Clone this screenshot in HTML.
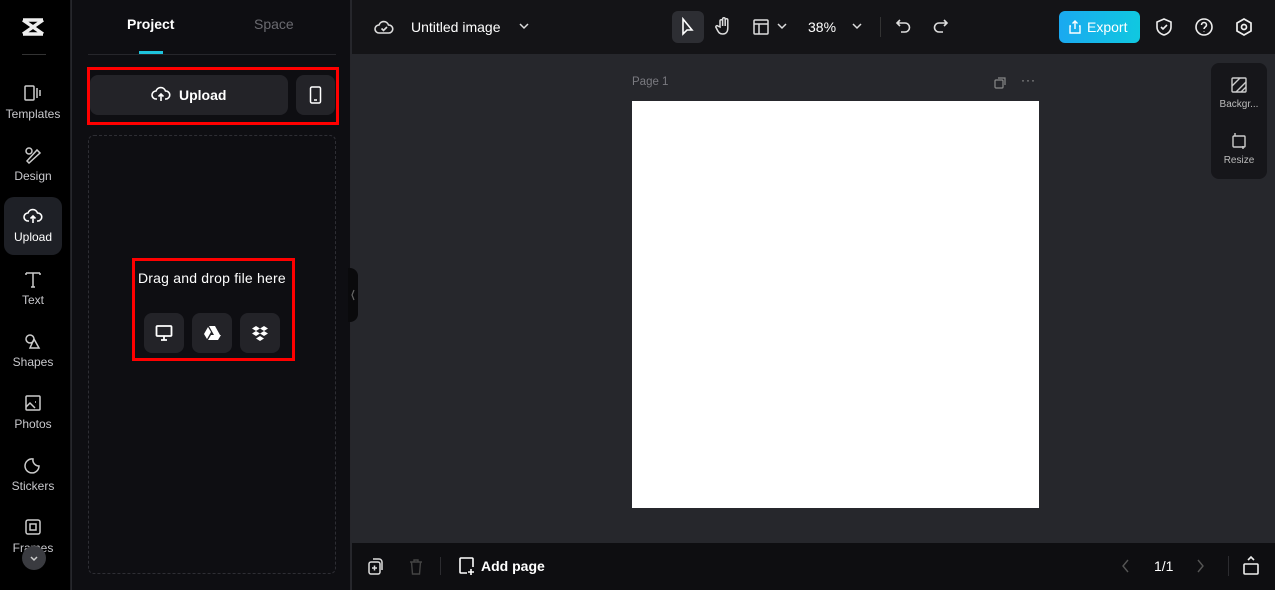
<!DOCTYPE html>
<html><head><meta charset="utf-8"><style>
*{box-sizing:border-box;margin:0;padding:0}
body{width:1275px;height:590px;overflow:hidden;background:#26272c;font-family:"Liberation Sans",sans-serif;color:#fff;position:relative}
.abs{position:absolute}
svg{display:block}
.nav{left:0;top:0;width:71px;height:590px;background:#000;border-right:1px solid #1e1e22}
.ni{position:absolute;left:4px;width:58px;height:58px;text-align:center;font-size:12px;color:#c8c8cc}
.ni svg{margin:10px auto 5px}
.panel{left:72px;top:0;width:279px;height:590px;background:#0e0e12;border-right:1px solid #26262b}
.top{left:352px;top:0;width:923px;height:54px;background:#141417}
.bot{left:352px;top:543px;width:923px;height:47px;background:#0e0e11}
.btn{background:#232328;border-radius:8px}
</style></head><body>
<div class="abs nav">
 <svg class="abs" style="left:21px;top:17px" width="24" height="20" viewBox="0 0 24 20"><path d="M2 3h20M2 17h20M2 3l20 14M22 3L2 17" stroke="#eee" stroke-width="3.5" fill="none"/></svg>
 <div class="abs" style="left:22px;top:54px;width:24px;height:1px;background:#333"></div>
 <div class="ni" style="top:74px"><svg width="20" height="18" viewBox="0 0 20 18" fill="none" stroke="#ccc" stroke-width="1.5"><rect x="2" y="2" width="9" height="14" rx="1"/><path d="M14 4v10M17 6v6"/></svg>Templates</div>
 <div class="ni" style="top:136px"><svg width="20" height="18" viewBox="0 0 20 18" fill="none" stroke="#ccc" stroke-width="1.5"><circle cx="6" cy="5" r="3"/><path d="M4 15l10-11 3 3-11 10z"/></svg>Design</div>
 <div class="ni" style="top:197px;background:#1e2026;border-radius:10px;color:#fff"><svg width="20" height="18" viewBox="0 0 20 18" fill="none" stroke="#fff" stroke-width="1.6"><path d="M6 14H5a4 4 0 010-8 5 5 0 019.5 0A4 4 0 0115 14h-1M10 16V9M7.5 11.5L10 9l2.5 2.5"/></svg>Upload</div>
 <div class="ni" style="top:260px"><svg width="20" height="18" viewBox="0 0 20 18" fill="none" stroke="#ccc" stroke-width="1.5"><path d="M3 3h14M10 3v14M3 3v2M17 3v2M8 17h4"/></svg>Text</div>
 <div class="ni" style="top:322px"><svg width="20" height="18" viewBox="0 0 20 18" fill="none" stroke="#ccc" stroke-width="1.5"><circle cx="7" cy="7" r="4"/><path d="M11 7l5 9H7z"/></svg>Shapes</div>
 <div class="ni" style="top:384px"><svg width="20" height="18" viewBox="0 0 20 18" fill="none" stroke="#ccc" stroke-width="1.5"><rect x="3" y="2" width="14" height="14" rx="1"/><path d="M3 13l4-4 5 5M12 8l1 0"/></svg>Photos</div>
 <div class="ni" style="top:446px"><svg width="20" height="18" viewBox="0 0 20 18" fill="none" stroke="#ccc" stroke-width="1.5"><path d="M16 10a7 7 0 11-6-7 6 6 0 006 7z"/></svg>Stickers</div>
 <div class="ni" style="top:508px"><svg width="20" height="18" viewBox="0 0 20 18" fill="none" stroke="#ccc" stroke-width="1.5"><rect x="3" y="2" width="14" height="14" rx="2"/><rect x="7" y="6" width="6" height="6"/></svg>Frames</div>
 <div class="abs" style="left:22px;top:546px;width:24px;height:24px;border-radius:50%;background:#3a3b40"><svg width="24" height="24" viewBox="0 0 24 24"><path d="M9 11l3 3 3-3" stroke="#ccc" stroke-width="1.5" fill="none"/></svg></div>
</div>
<div class="abs panel">
 <div class="abs" style="left:55px;top:16px;font-size:14px;font-weight:bold">Project</div>
 <div class="abs" style="left:182px;top:16px;font-size:14px;color:#6a6a70">Space</div>
 <div class="abs" style="left:16px;top:54px;width:248px;height:1px;background:#26262b"></div>
 <div class="abs" style="left:67px;top:51px;width:24px;height:3px;background:#1ec3dc"></div>
 <div class="abs btn" style="left:18px;top:75px;width:198px;height:40px"></div>
 <svg class="abs" style="left:79px;top:85px" width="20" height="18" viewBox="0 0 20 18" fill="none" stroke="#fff" stroke-width="1.6"><path d="M6 14H5a4 4 0 010-8 5 5 0 019.5 0A4 4 0 0115 14h-1M10 16V9M7.5 11.5L10 9l2.5 2.5"/></svg>
 <div class="abs" style="left:107px;top:87px;font-size:14px;font-weight:bold">Upload</div>
 <div class="abs btn" style="left:224px;top:75px;width:39px;height:40px"></div>
 <svg class="abs" style="left:237px;top:86px" width="13" height="18" viewBox="0 0 13 18" fill="none" stroke="#fff" stroke-width="1.5"><rect x="1.5" y="1" width="10" height="16" rx="1.5"/><path d="M5 14h3"/></svg>
 <div class="abs" style="left:15px;top:67px;width:252px;height:58px;border:3px solid #f00"></div>
 <div class="abs" style="left:16px;top:135px;width:248px;height:439px;border:1px dashed #2e2e34;border-radius:6px"></div>
 <div class="abs" style="left:60px;top:258px;width:163px;height:103px;border:3px solid #f00"></div>
 <div class="abs" style="left:66px;top:270px;font-size:14px;letter-spacing:0.2px">Drag and drop file here</div>
 <div class="abs btn" style="left:72px;top:313px;width:40px;height:40px"><svg width="40" height="40" viewBox="0 0 40 40" fill="none" stroke="#fff" stroke-width="1.8"><rect x="12.5" y="13" width="15" height="10" rx="1"/><path d="M17 27h6M20 23v4"/></svg></div>
 <div class="abs btn" style="left:120px;top:313px;width:40px;height:40px"><svg width="40" height="40" viewBox="0 0 40 40" fill="#fff"><path d="M17 13h6l5 9h-6zM16 14l3 5-4 7-3-5zM19 22h10l-3 5H16z"/></svg></div>
 <div class="abs btn" style="left:168px;top:313px;width:40px;height:40px"><svg width="40" height="40" viewBox="0 0 40 40" fill="#fff"><path d="M16 13l4 2.5-4 2.5-4-2.5zM24 13l4 2.5-4 2.5-4-2.5zM16 18l4 2.5-4 2.5-4-2.5zM24 18l4 2.5-4 2.5-4-2.5zM20 23l4 2.5-4 2.5-4-2.5z"/></svg></div>
</div>
<div class="abs" style="left:348px;top:268px;width:10px;height:54px;background:#0a0a0c;border-radius:0 8px 8px 0"><svg width="10" height="54"><path d="M6 22l-2 5 2 5" stroke="#666" stroke-width="1.2" fill="none"/></svg></div>
<div class="abs top">
 <svg class="abs" style="left:22px;top:17px" width="20" height="20" viewBox="0 0 20 20" fill="none" stroke="#ddd" stroke-width="1.6"><path d="M6 16H5a4 4 0 010-8 5 5 0 019.5 0A4 4 0 0115 16zM7.5 11.5l2 2 3.5-3.5"/></svg>
 <div class="abs" style="left:59px;top:19px;font-size:14px">Untitled image</div>
 <svg class="abs" style="left:166px;top:21px" width="12" height="10"><path d="M2 3l4 4 4-4" stroke="#ddd" stroke-width="1.5" fill="none"/></svg>
 <div class="abs" style="left:320px;top:11px;width:32px;height:32px;background:#2d2e33;border-radius:6px"></div>
 <svg class="abs" style="left:327px;top:17px" width="18" height="20" viewBox="0 0 18 20" fill="none" stroke="#fff" stroke-width="1.6"><path d="M4 2v15l4-4 5 0z"/></svg>
 <svg class="abs" style="left:363px;top:16px" width="18" height="20" viewBox="0 0 18 20" fill="none" stroke="#ddd" stroke-width="1.5"><path d="M5 11V5a1.3 1.3 0 012.6 0v5V3a1.3 1.3 0 012.6 0v7V4a1.3 1.3 0 012.6 0v8c0 4-2 6-5 6s-4-1-6-5l-1-2a1.2 1.2 0 012-1z"/></svg>
 <svg class="abs" style="left:400px;top:18px" width="18" height="18" viewBox="0 0 18 18" fill="none" stroke="#ddd" stroke-width="1.5"><rect x="2" y="2" width="14" height="14" rx="1"/><path d="M2 6h14M7 6v10"/></svg>
 <svg class="abs" style="left:424px;top:22px" width="12" height="10"><path d="M2 2l4 4 4-4" stroke="#ddd" stroke-width="1.5" fill="none"/></svg>
 <div class="abs" style="left:456px;top:19px;font-size:14px">38%</div>
 <svg class="abs" style="left:499px;top:22px" width="12" height="10"><path d="M2 2l4 4 4-4" stroke="#ddd" stroke-width="1.5" fill="none"/></svg>
 <div class="abs" style="left:528px;top:17px;width:1px;height:20px;background:#333"></div>
 <svg class="abs" style="left:543px;top:18px" width="18" height="18" viewBox="0 0 18 18" fill="none" stroke="#ddd" stroke-width="1.6"><path d="M5 2L2 5l3 3M2 5h8a4.5 4.5 0 010 9H6"/></svg>
 <svg class="abs" style="left:579px;top:18px" width="18" height="18" viewBox="0 0 18 18" fill="none" stroke="#ddd" stroke-width="1.6"><path d="M13 2l3 3-3 3M16 5H8a4.5 4.5 0 000 9h4"/></svg>
 <div class="abs" style="left:707px;top:11px;width:81px;height:32px;border-radius:6px;background:linear-gradient(90deg,#1aa9f0,#10c8e0)"></div>
 <svg class="abs" style="left:716px;top:19px" width="14" height="16" viewBox="0 0 14 16" fill="none" stroke="#fff" stroke-width="1.4"><path d="M3 7H2v7h10V7h-1M7 10V2M4.5 4.5L7 2l2.5 2.5"/></svg>
 <div class="abs" style="left:735px;top:19px;font-size:14px">Export</div>
 <svg class="abs" style="left:802px;top:17px" width="20" height="20" viewBox="0 0 20 20" fill="none" stroke="#eee" stroke-width="1.6"><path d="M10 2l7 3v5c0 4-3 7-7 8-4-1-7-4-7-8V5z M7 10l2 2 4-4"/></svg>
 <svg class="abs" style="left:842px;top:17px" width="20" height="20" viewBox="0 0 20 20" fill="none" stroke="#eee" stroke-width="1.6"><circle cx="10" cy="10" r="8"/><path d="M7.5 8a2.5 2.5 0 115 0c0 2-2.5 2-2.5 4M10 14.5v.5"/></svg>
 <svg class="abs" style="left:882px;top:17px" width="20" height="20" viewBox="0 0 20 20" fill="none" stroke="#eee" stroke-width="1.7"><path d="M10 2l7 4v8l-7 4-7-4V6z"/><circle cx="10" cy="10" r="2.5"/></svg>
</div>
<div class="abs" style="left:632px;top:76px;font-size:11.5px;color:#7a7a80">Page 1</div>
<svg class="abs" style="left:993px;top:76px" width="14" height="14" viewBox="0 0 14 14" fill="none" stroke="#888" stroke-width="1.2"><rect x="2" y="4" width="8" height="8" rx="1"/><path d="M5 2h7v7"/></svg>
<div class="abs" style="left:1021px;top:73px;font-size:12px;color:#aaa;letter-spacing:1px">···</div>
<div class="abs" style="left:632px;top:101px;width:407px;height:407px;background:#fff"></div>
<div class="abs" style="left:1211px;top:63px;width:56px;height:116px;background:#16161a;border-radius:8px"></div>
<svg class="abs" style="left:1230px;top:76px" width="18" height="18" viewBox="0 0 18 18" fill="none" stroke="#ccc" stroke-width="1.4"><rect x="2" y="2" width="14" height="14" rx="1"/><path d="M2 10l8-8M6 16l10-10M11 16l5-5"/></svg>
<div class="abs" style="left:1211px;top:99px;width:56px;text-align:center;font-size:10px;color:#bbb">Backgr...</div>
<svg class="abs" style="left:1230px;top:132px" width="18" height="18" viewBox="0 0 18 18" fill="none" stroke="#ccc" stroke-width="1.4"><rect x="3" y="4" width="12" height="11" rx="1"/><path d="M5 1v3M13 14v3"/></svg>
<div class="abs" style="left:1211px;top:155px;width:56px;text-align:center;font-size:10px;color:#bbb">Resize</div>
<div class="abs bot">
 <svg class="abs" style="left:15px;top:14px" width="18" height="20" viewBox="0 0 18 20" fill="none" stroke="#ddd" stroke-width="1.5"><rect x="2" y="5" width="11" height="12" rx="2"/><path d="M6 2h6a3 3 0 013 3v8M7.5 8.5v5M5 11h5"/></svg>
 <svg class="abs" style="left:56px;top:15px" width="16" height="18" viewBox="0 0 16 18" fill="none" stroke="#444" stroke-width="1.4"><path d="M2 4h12M6 4V2h4v2M3.5 4l1 12h7l1-12"/></svg>
 <div class="abs" style="left:88px;top:14px;width:1px;height:18px;background:#2c2c30"></div>
 <svg class="abs" style="left:105px;top:13px" width="20" height="20" viewBox="0 0 20 20" fill="none" stroke="#fff" stroke-width="1.6"><path d="M10 17H4a1 1 0 01-1-1V3a1 1 0 011-1h11a1 1 0 011 1v8M14 13v6M11 16h6"/></svg>
 <div class="abs" style="left:129px;top:15px;font-size:14px;font-weight:bold">Add page</div>
 <svg class="abs" style="left:768px;top:15px" width="12" height="16"><path d="M8 2L3 8l5 6" stroke="#555" stroke-width="1.4" fill="none"/></svg>
 <div class="abs" style="left:802px;top:15px;font-size:14px">1/1</div>
 <svg class="abs" style="left:842px;top:15px" width="12" height="16"><path d="M4 2l5 6-5 6" stroke="#555" stroke-width="1.4" fill="none"/></svg>
 <div class="abs" style="left:876px;top:13px;width:1px;height:20px;background:#2c2c30"></div>
 <svg class="abs" style="left:890px;top:12px" width="18" height="22" viewBox="0 0 18 22" fill="none" stroke="#eee" stroke-width="1.6"><rect x="2" y="9" width="14" height="10" rx="1"/><path d="M6 5l3-3 3 3"/></svg>
</div>
</body></html>
